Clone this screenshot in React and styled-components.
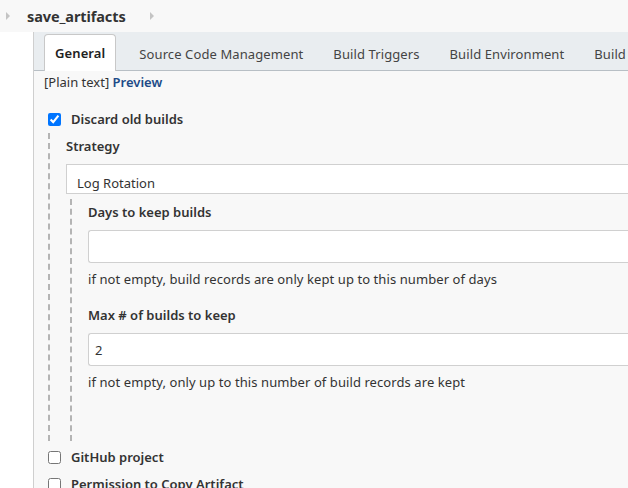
import React from 'react'
import styled, { createGlobalStyle } from 'styled-components'

const GlobalStyle = createGlobalStyle`
  body {
    margin: 0;
    background: #fff;
    font-family: "Noto Sans", "Open Sans", "Liberation Sans", sans-serif;
    font-size: 13px;
    color: #333;
  }
`

const Page = styled.div`
  width: 628px;
  height: 488px;
  overflow: hidden;
`

const Breadcrumbs = styled.div`
  height: 32px;
  background: #f8f8f8;
  display: flex;
  align-items: center;
  padding-left: 6px;
`

const Arrow = styled.span`
  width: 0;
  height: 0;
  border-top: 4px solid transparent;
  border-bottom: 4px solid transparent;
  border-left: 4px solid #c4c4c4;
  margin: 0 ${p => p.gap}px 0 ${p => p.lead}px;
`

const Crumb = styled.span`
  font-weight: 700;
  font-size: 14.5px;
  color: #333;
  letter-spacing: -0.1px;
`

const Main = styled.div`
  margin-left: 33px;
  border-left: 1px solid #cfcfcf;
  background: #f8f8f8;
  height: 456px;
  overflow: hidden;
`

const TabBar = styled.div`
  display: flex;
  align-items: flex-end;
  height: 38px;
  padding-left: 10px;
  background: #e9edf0;
  border-bottom: 1px solid #b8bfc5;
  white-space: nowrap;
`

const Tab = styled.div`
  display: flex;
  align-items: center;
  padding: 0 ${p => (p.active ? 10 : 14)}px;
  margin-right: ${p => (p.active ? 8 : 0)}px;
  margin-bottom: -1px;
  box-sizing: border-box;
  font-size: 13px;
  letter-spacing: 0.1px;
  color: ${p => (p.active ? '#222' : '#444')};
  font-weight: ${p => (p.active ? 600 : 400)};
  background: ${p => (p.active ? '#fff' : 'transparent')};
  border: 1px solid ${p => (p.active ? '#c8c8c8' : 'transparent')};
  border-bottom: none;
  border-radius: 4px 4px 0 0;
  height: ${p => (p.active ? 37 : 35)}px;
`

const Content = styled.div`
  padding: 2px 0 0 10px;
`

const Markup = styled.div`
  font-size: 13px;
  line-height: 18px;
  color: #333;

  a {
    color: #204a87;
    font-weight: 600;
    text-decoration: none;
  }
`

const CheckRow = styled.label`
  display: flex;
  align-items: center;
  gap: 10px;
  margin-left: 4px;
  height: 20px;
  margin-top: ${p => p.top}px;
  font-weight: 600;
  font-size: 13px;
  color: #333;
  white-space: nowrap;

  input {
    margin: 0;
    width: 13px;
    height: 13px;
    accent-color: #0075ff;
  }
`

const Nested = styled.div`
  border-left: 2px dashed #b4b4b4;
  margin: ${p => p.top}px 0 0 ${p => p.left}px;
  padding-left: ${p => p.pad}px;
  padding-top: ${p => p.padTop}px;
  height: ${p => p.h}px;
  box-sizing: border-box;
`

const Label = styled.div`
  font-weight: 600;
  font-size: 13px;
  color: #333;
  line-height: 18px;
  margin-top: ${p => p.top || 0}px;
`

const Select = styled.div`
  margin-top: 9px;
  height: 30px;
  box-sizing: border-box;
  background: #fff;
  border: 1px solid #d0d0d0;
  border-right: none;
  padding: 9px 0 0 10px;
  font-size: 13px;
  line-height: 18px;
  color: #333;
  overflow: hidden;
  margin-right: -4px;
`

const Input = styled.div`
  margin-top: ${p => p.top}px;
  height: 33px;
  box-sizing: border-box;
  background: #fff;
  border: 1px solid #d0d0d0;
  border-right: none;
  border-radius: 3px 0 0 3px;
  padding-left: 6px;
  display: flex;
  align-items: center;
  font-size: 13px;
  color: #333;
  margin-right: -4px;
`

const Help = styled.div`
  margin-top: 7px;
  font-size: 13px;
  line-height: 18px;
  letter-spacing: 0.08px;
  color: #333;
  white-space: nowrap;
`

export default function App() {
  return (
    <Page>
      <GlobalStyle />
      <Breadcrumbs>
        <Arrow lead={0} gap={17} />
        <Crumb>save_artifacts</Crumb>
        <Arrow lead={24} gap={0} />
      </Breadcrumbs>
      <Main>
        <TabBar>
          <Tab active>General</Tab>
          <Tab>Source Code Management</Tab>
          <Tab>Build Triggers</Tab>
          <Tab>Build Environment</Tab>
          <Tab>Build</Tab>
        </TabBar>
        <Content>
          <Markup>
            [Plain text] <a href="#">Preview</a>
          </Markup>
          <CheckRow top={18}>
            <input type="checkbox" defaultChecked />
            Discard old builds
          </CheckRow>
          <Nested top={4} left={4} pad={16} padTop={4} h={308}>
            <Label>Strategy</Label>
            <Select>Log Rotation</Select>
            <Nested top={5} left={4} pad={16} padTop={4} h={242}>
              <Label>Days to keep builds</Label>
              <Input top={9} />
              <Help>if not empty, build records are only kept up to this number of days</Help>
              <Label top={18}>Max # of builds to keep</Label>
              <Input top={9}>2</Input>
              <Help>if not empty, only up to this number of build records are kept</Help>
            </Nested>
          </Nested>
          <CheckRow top={6}>
            <input type="checkbox" />
            GitHub project
          </CheckRow>
          <CheckRow top={7}>
            <input type="checkbox" />
            Permission to Copy Artifact
          </CheckRow>
        </Content>
      </Main>
    </Page>
  )
}
